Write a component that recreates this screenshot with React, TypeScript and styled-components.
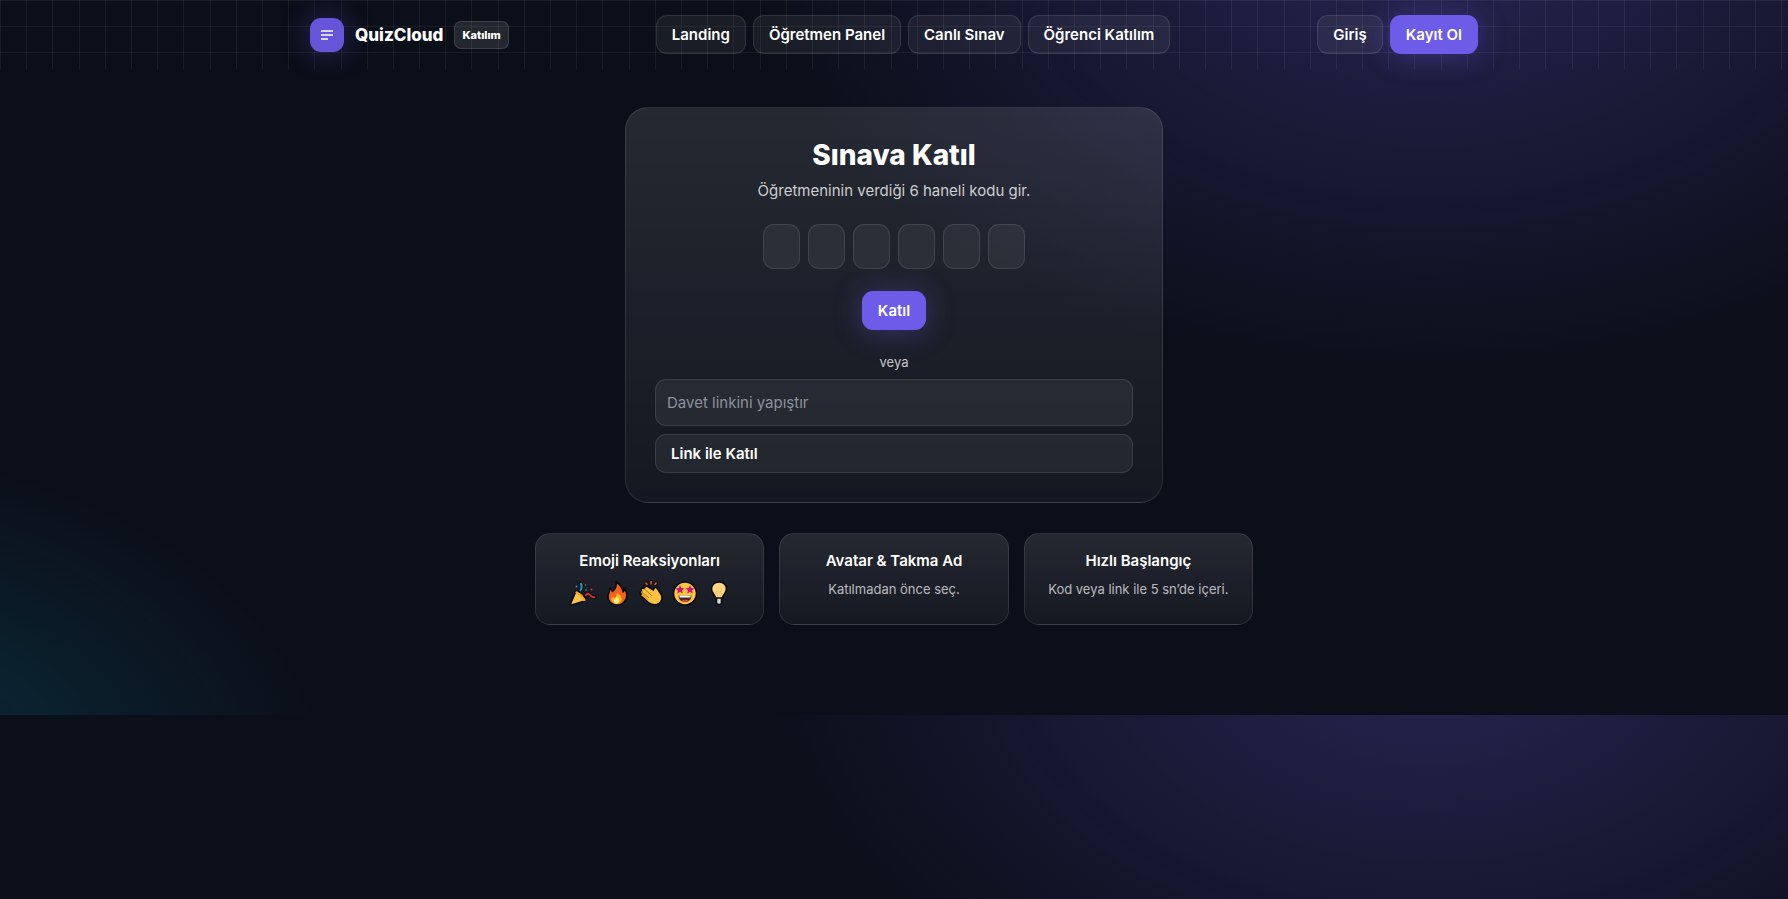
import React from "react";
import styled, { createGlobalStyle, css } from "styled-components";

const GlobalStyle = createGlobalStyle`
  *, *::before, *::after { box-sizing: border-box; }
  body {
    margin: 0;
    color: #fff;
    font-family: Inter, "Liberation Sans", sans-serif;
    font-size: 15px;
    line-height: 22px;
    background:
      radial-gradient(1122px 748px at 80% -10%, rgba(108, 92, 231, 0.28), transparent 60%),
      radial-gradient(842px 561px at -10% 110%, rgba(0, 209, 255, 0.18), transparent 60%),
      #0b0f19;
  }
`;

const Header = styled.header`
  padding: 15px 16px;
  background-image:
    repeating-linear-gradient(90deg, rgba(255, 255, 255, 0.06) 0 1px, transparent 1px 1.465vw),
    repeating-linear-gradient(180deg, rgba(255, 255, 255, 0.06) 0 1px, transparent 1px 26px);
`;

const HeaderInner = styled.div`
  display: flex;
  align-items: center;
  justify-content: space-between;
  max-width: 1168px;
  margin: 0 auto;
`;

const Brand = styled.div`
  display: flex;
  align-items: center;
  gap: 11px;
`;

const LogoMark = styled.span`
  display: grid;
  place-items: center;
  width: 34px;
  height: 34px;
  border-radius: 11px;
  background: #6655d8;
  box-shadow: 0 0 28px rgba(108, 92, 231, 0.35);
`;

const BrandName = styled.span`
  font-size: 17px;
  font-weight: 800;
`;

const Tag = styled.span`
  padding: 2px 7px;
  border: 1px solid rgba(255, 255, 255, 0.12);
  border-radius: 7px;
  background: rgba(255, 255, 255, 0.1);
  font-size: 11px;
  font-weight: 800;
`;

const ButtonRow = styled.div`
  display: flex;
  gap: 7px;
`;

const buttonLook = css<{ $primary?: boolean }>`
  display: block;
  padding: 8px 15px;
  border: 1px solid ${(p) => (p.$primary ? "transparent" : "rgba(255, 255, 255, 0.1)")};
  border-radius: 11px;
  background: ${(p) => (p.$primary ? "#6c5ce7" : "rgba(255, 255, 255, 0.06)")};
  box-shadow: ${(p) => (p.$primary ? "0 2px 28px rgba(108, 92, 231, 0.35)" : "none")};
  color: #fff;
  font: inherit;
  font-weight: 600;
  line-height: 21px;
  text-align: left;
  text-decoration: none;
  cursor: pointer;
`;

const ButtonLink = styled.a<{ $primary?: boolean }>`
  ${buttonLook}
`;

const Button = styled.button<{ $primary?: boolean }>`
  ${buttonLook}
`;

const Main = styled.main`
  display: flex;
  flex-direction: column;
  align-items: center;
  gap: 30px;
  padding: 38px 16px 90px;
`;

const panel = css`
  border: 1px solid rgba(255, 255, 255, 0.1);
  background: linear-gradient(180deg, rgba(255, 255, 255, 0.11), rgba(255, 255, 255, 0.04));
  text-align: center;
`;

const JoinCard = styled.section`
  ${panel}
  display: flex;
  flex-direction: column;
  align-items: center;
  width: 100%;
  max-width: 538px;
  padding: 29px;
  border-radius: 23px;
`;

const Title = styled.h1`
  margin: 0 0 7px;
  font-size: 28px;
  font-weight: 800;
  line-height: 36px;
`;

const Subtitle = styled.p`
  margin: 0;
  color: rgba(255, 255, 255, 0.78);
`;

const CodeForm = styled.form`
  display: flex;
  flex-direction: column;
  align-items: center;
  gap: 22px;
  margin-top: 22px;
`;

const CodeCells = styled.div`
  display: flex;
  gap: 8px;
`;

const CodeCell = styled.input`
  width: 37px;
  height: 45px;
  padding: 0;
  border: 1px solid rgba(255, 255, 255, 0.1);
  border-radius: 11px;
  background: rgba(255, 255, 255, 0.06);
  color: #fff;
  font: inherit;
  font-weight: 700;
  text-align: center;
`;

const Divider = styled.p`
  margin: 21px 0 6px;
  color: rgba(255, 255, 255, 0.75);
  font-size: 13px;
`;

const LinkForm = styled.form`
  display: flex;
  flex-direction: column;
  gap: 8px;
  width: 100%;
`;

const LinkInput = styled.input`
  width: 100%;
  height: 47px;
  padding: 0 11px;
  border: 1px solid rgba(255, 255, 255, 0.1);
  border-radius: 11px;
  background: rgba(255, 255, 255, 0.06);
  color: #fff;
  font: inherit;

  &::placeholder {
    color: #8b919d;
    opacity: 1;
  }
`;

const Features = styled.section`
  display: grid;
  grid-template-columns: repeat(3, 1fr);
  gap: 15px;
  width: 100%;
  max-width: 718px;
`;

const Feature = styled.article`
  ${panel}
  min-height: 92px;
  padding: 16px 15px 15px;
  border-radius: 15px;
`;

const FeatureTitle = styled.h2`
  margin: 0 0 6px;
  font-size: 15px;
  font-weight: 600;
  line-height: 22px;
`;

const FeatureText = styled.p`
  margin: 0;
  color: rgba(255, 255, 255, 0.7);
  font-size: 13px;
`;

const Emojis = styled.div`
  display: flex;
  justify-content: center;
  gap: 8px;
  padding: 2px 0 0 2px;
`;

const EmojiIcon = styled.svg`
  display: block;
  width: 26px;
  height: 26px;
  overflow: visible;
`;

const outline = { stroke: "#0b0b0d", strokeWidth: 1.6, strokeLinejoin: "round" as const };

const PartyIcon = () => (
  <EmojiIcon viewBox="0 0 26 26" role="img" aria-label="Konfeti">
    <path d="M6 11 L16 20.500 L1.500 25 Q0 25 0.600 23.600 Z" fill="#fcc44c" {...outline} />
    <path d="M6 11 Q12.500 13.500 16 20.500 L13.500 21.300 Q9.500 14.500 5.300 13 Z" fill="#f5a623" />
    <g fill="none" stroke="#0b0b0d" strokeWidth="4" strokeLinecap="round">
      <path d="M10 11 Q13 7 10.500 3" />
      <path d="M15.500 16 Q17.500 12 20 15 T25 17" />
    </g>
    <path d="M10 11 Q13 7 10.500 3" fill="none" stroke="#259bc4" strokeWidth="2" />
    <path d="M15.500 16 Q17.500 12 20 15 T25 17" fill="none" stroke="#d9363e" strokeWidth="1.800" />
    <g stroke="#0b0b0d" strokeWidth="0.700">
      <circle cx="6.500" cy="6.500" r="1.200" fill="#3cb4e6" />
      <circle cx="15.500" cy="5" r="1.200" fill="#e5482d" />
      <circle cx="21.500" cy="9.500" r="1.300" fill="#e5482d" />
      <circle cx="16" cy="10" r="1.200" fill="#3cb4e6" />
    </g>
  </EmojiIcon>
);

const FireIcon = () => (
  <EmojiIcon viewBox="0 0 26 26" role="img" aria-label="Ateş">
    <path d="M12 1.500 C16 4 19 9 19 12 C20 11 20.500 10 20.500 8.500 C23 12 23.500 17 21 21 C18.500 25 13.500 25.500 10 24.500 C4.500 23 2.500 17.500 5 12.500 C5.500 11 6 9.500 6 8 C7.500 9 8 10 8.500 11.500 C11.500 9 12.800 5 12 1.500 Z" fill="#f4631e" {...outline} />
    <path d="M13 13 C18 16 19 19.500 16.500 22 C14.500 24.500 10.500 24.500 8.500 22 C6.500 19.500 7.500 17.500 9 16.500 L10.500 18.500 Q13 16 13 13 Z" fill="#fdb72b" />
    <path d="M13 17 Q16.500 20 14.500 22.500 Q12.500 24.500 10.500 22.500 Q8.800 20 13 17 Z" fill="#fff27a" />
  </EmojiIcon>
);

const ClapIcon = () => (
  <EmojiIcon viewBox="0 0 26 26" role="img" aria-label="Alkış">
    <path d="M2 13 Q2 11.500 3.500 11.500 L3 9.500 Q4 7.500 6 8.500 L7 7 Q8.500 5.500 10.500 7 L15.500 10 L16 8 Q18 6.500 20 9.500 L23.500 15 Q25.500 20 21 23.500 Q16 26.500 11 23 L3 16 Q1.500 14.500 3.500 13.800 Z" fill="#fcc13e" {...outline} />
    <path d="M3.500 11.500 L11 18 M6 8.500 L13.500 15.500 M3.500 13.800 L9.500 19.500" stroke="#bd7b18" strokeWidth="1" fill="none" />
    <path d="M9 4.500 L8 3 M13 4 L13 1.500 M17 4.500 L18 3" stroke="#0b0b0d" strokeWidth="3.600" strokeLinecap="round" />
    <path d="M9 4.500 L8 3 M13 4 L13 1.500 M17 4.500 L18 3" stroke="#e2552c" strokeWidth="1.600" strokeLinecap="round" />
  </EmojiIcon>
);

const star = "M0 -4.600 L1.300 -1.600 L4.500 -1.300 L2.100 0.900 L2.800 4 L0 2.400 L-2.800 4 L-2.100 0.900 L-4.500 -1.300 L-1.300 -1.600 Z";

const StarEyesIcon = () => (
  <EmojiIcon viewBox="0 0 26 26" role="img" aria-label="Yıldız gözlü yüz">
    <circle cx="13" cy="13.500" r="11.500" fill="#fcc73f" {...outline} />
    <path d={star} transform="translate(8 9.500)" fill="#d1147b" />
    <path d={star} transform="translate(18 9.500)" fill="#d1147b" />
    <path d="M6.500 15.500 H19.500 Q19.500 22 13 22 Q6.500 22 6.500 15.500 Z" fill="#4b2b19" />
    <path d="M7.500 15.500 H18.500 V17.500 H7.500 Z" fill="#fff" />
    <path d="M9.500 20.800 Q13 18.500 16.500 20.800 Q13 22.800 9.500 20.800 Z" fill="#ef4351" />
  </EmojiIcon>
);

const BulbIcon = () => (
  <EmojiIcon viewBox="0 0 26 26" role="img" aria-label="Ampul">
    <path d="M10.500 17 H15.500 V23.500 Q13 25.500 10.500 23.500 Z" fill="#d5dce4" {...outline} />
    <path d="M13 2 C17.500 2 20.500 5 20.500 9 C20.500 13 17 14.500 16.500 18 H9.500 C9 14.500 5.500 13 5.500 9 C5.500 5 8.500 2 13 2 Z" fill="#fdd67d" {...outline} />
    <path d="M11.500 17 L10.500 11 L13 12.500 L15.500 11 L14.500 17" fill="none" stroke="#f3b95c" strokeWidth="0.800" />
  </EmojiIcon>
);

const navItems = ["Landing", "Öğretmen Panel", "Canlı Sınav", "Öğrenci Katılım"];

const stop = (e: React.FormEvent) => e.preventDefault();

export default function App() {
  return (
    <>
      <GlobalStyle />
      <Header>
        <HeaderInner>
          <Brand>
            <LogoMark>
              <svg width="14" height="14" viewBox="0 0 14 14" fill="none" stroke="#fff" strokeWidth="1.500" aria-hidden="true">
                <path d="M1 3 H13 M1 7 H13 M1 11 H8" />
              </svg>
            </LogoMark>
            <BrandName>QuizCloud</BrandName>
            <Tag>Katılım</Tag>
          </Brand>
          <ButtonRow as="nav">
            {navItems.map((item) => (
              <ButtonLink key={item} href="#">{item}</ButtonLink>
            ))}
          </ButtonRow>
          <ButtonRow>
            <ButtonLink href="#">Giriş</ButtonLink>
            <ButtonLink href="#" $primary>Kayıt Ol</ButtonLink>
          </ButtonRow>
        </HeaderInner>
      </Header>
      <Main>
        <JoinCard>
          <Title>Sınava Katıl</Title>
          <Subtitle>Öğretmeninin verdiği 6 haneli kodu gir.</Subtitle>
          <CodeForm onSubmit={stop}>
            <CodeCells>
              {[1, 2, 3, 4, 5, 6].map((n) => (
                <CodeCell key={n} maxLength={1} inputMode="numeric" aria-label={`${n}. hane`} />
              ))}
            </CodeCells>
            <Button type="submit" $primary>Katıl</Button>
          </CodeForm>
          <Divider>veya</Divider>
          <LinkForm onSubmit={stop}>
            <LinkInput type="text" placeholder="Davet linkini yapıştır" aria-label="Davet linki" />
            <Button type="submit">Link ile Katıl</Button>
          </LinkForm>
        </JoinCard>
        <Features>
          <Feature>
            <FeatureTitle>Emoji Reaksiyonları</FeatureTitle>
            <Emojis>
              <PartyIcon />
              <FireIcon />
              <ClapIcon />
              <StarEyesIcon />
              <BulbIcon />
            </Emojis>
          </Feature>
          <Feature>
            <FeatureTitle>Avatar &amp; Takma Ad</FeatureTitle>
            <FeatureText>Katılmadan önce seç.</FeatureText>
          </Feature>
          <Feature>
            <FeatureTitle>Hızlı Başlangıç</FeatureTitle>
            <FeatureText>Kod veya link ile 5 sn’de içeri.</FeatureText>
          </Feature>
        </Features>
      </Main>
    </>
  );
}
